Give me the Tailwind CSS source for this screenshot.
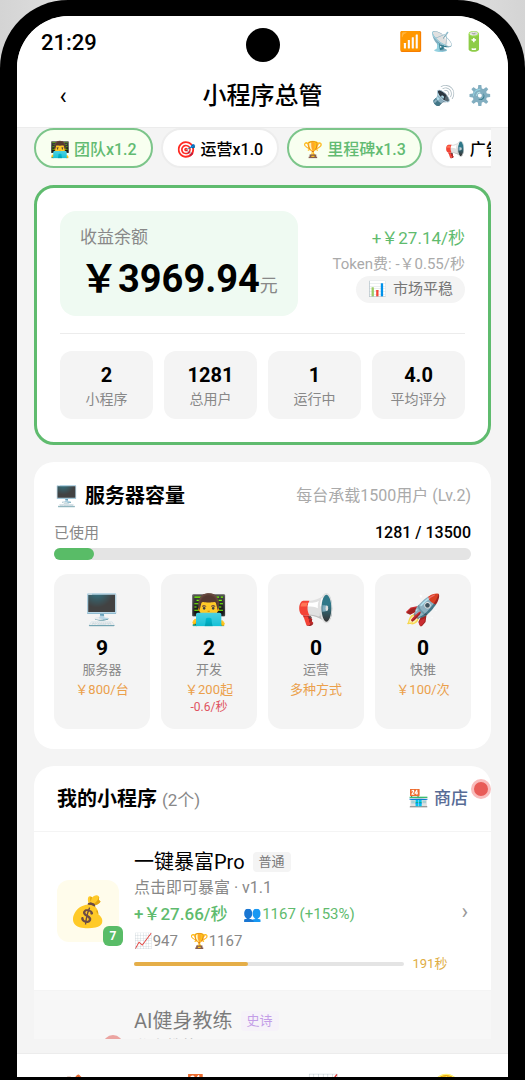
<!DOCTYPE html>
<html lang="zh-CN">
<head>
  <meta charset="UTF-8">
  <meta name="viewport" content="width=device-width, initial-scale=1.0">
  <title>小程序总管</title>
  <script src="https://cdn.jsdelivr.net/npm/@tailwindcss/browser@4"></script>
</head>
<body class="h-screen overflow-hidden bg-linear-to-r from-[#d4d4d4] via-white to-[#d4d4d4] font-[Roboto,'Noto_Sans_CJK_SC','Noto_Color_Emoji',sans-serif] text-black">
  <!-- Phone frame -->
  <div class="h-full rounded-t-[68px] bg-black px-[17px] pt-4 pb-[3px]">
    <div class="relative flex h-full flex-col overflow-hidden rounded-t-[52px] bg-[#f4f4f4]">
      <div class="absolute top-3 left-1/2 size-[34px] -translate-x-1/2 rounded-full bg-black"></div>

      <!-- Status bar and header -->
      <header class="shrink-0 border-b border-[#ececec] bg-white">
        <div class="flex h-[53px] items-center justify-between pr-[22px] pl-6">
          <time class="text-[22px] font-medium">21:29</time>
          <div class="flex gap-2 text-[19px]"><span>📶</span><span>📡</span><span>🔋</span></div>
        </div>
        <div class="grid h-[58px] grid-cols-3 items-center px-4 pb-1">
          <button class="w-15 text-center text-[24px]" aria-label="返回">‹</button>
          <h1 class="text-center text-[24px] font-medium whitespace-nowrap">小程序总管</h1>
          <div class="flex justify-end gap-3 text-[19px]"><button aria-label="声音">🔊</button><button aria-label="设置">⚙️</button></div>
        </div>
      </header>

      <main class="flex min-h-0 flex-1 flex-col gap-[17px] overflow-hidden px-[17px]">
        <!-- Multipliers -->
        <div class="flex shrink-0 gap-2 overflow-hidden text-[16px] font-medium whitespace-nowrap">
          <button class="flex h-10 shrink-0 items-center gap-1 rounded-full border-2 border-[#7cc58a] bg-[#f8fff0] px-[14px] pt-[3px] text-[#62bb72]"><span>👨‍💻</span>团队x1.2</button>
          <button class="flex h-10 shrink-0 items-center gap-1 rounded-full border-2 border-[#ededed] bg-white px-[14px] pt-[3px]"><span>🎯</span>运营x1.0</button>
          <button class="flex h-10 shrink-0 items-center gap-1 rounded-full border-2 border-[#7cc58a] bg-[#f8fff0] px-[14px] pt-[3px] text-[#62bb72]"><span>🏆</span>里程碑x1.3</button>
          <button class="flex h-10 shrink-0 items-center gap-1 rounded-full border-2 border-[#ededed] bg-white px-[14px] pt-[3px]"><span>📢</span>广告x1.0</button>
        </div>

        <!-- Balance -->
        <section class="shrink-0 rounded-[20px] border-3 border-[#5fbb6e] bg-white p-[23px]">
          <div class="flex items-center justify-between border-b border-[#ececec] pb-[17px]">
            <div class="rounded-2xl bg-[#effaf2] px-5 pt-[14px] pb-[6px]">
              <p class="text-[17px] leading-6 text-[#888]">收益余额</p>
              <p class="flex items-baseline text-[38px] leading-[61px] font-bold">￥3969.94<span class="text-[18px] leading-6 font-normal text-[#888]">元</span></p>
            </div>
            <div class="flex flex-col items-end">
              <p class="text-[17px] leading-7 text-[#5fbb6e]">+￥27.14/秒</p>
              <p class="text-[15px] leading-6 text-[#aaa]">Token费: -￥0.55/秒</p>
              <p class="flex items-center gap-[6px] rounded-full bg-[#f4f4f4] px-3 text-[15px] leading-[27px] text-[#777]"><span>📊</span>市场平稳</p>
            </div>
          </div>
          <dl class="mt-[17px] grid grid-cols-4 gap-[11px] text-center">
            <div class="flex flex-col-reverse rounded-xl bg-[#f4f4f4] pt-3 pb-2"><dt class="text-[14px] leading-6 text-[#888]">小程序</dt><dd class="text-[20px] leading-6 font-bold">2</dd></div>
            <div class="flex flex-col-reverse rounded-xl bg-[#f4f4f4] pt-3 pb-2"><dt class="text-[14px] leading-6 text-[#888]">总用户</dt><dd class="text-[20px] leading-6 font-bold">1281</dd></div>
            <div class="flex flex-col-reverse rounded-xl bg-[#f4f4f4] pt-3 pb-2"><dt class="text-[14px] leading-6 text-[#888]">运行中</dt><dd class="text-[20px] leading-6 font-bold">1</dd></div>
            <div class="flex flex-col-reverse rounded-xl bg-[#f4f4f4] pt-3 pb-2"><dt class="text-[14px] leading-6 text-[#888]">平均评分</dt><dd class="text-[20px] leading-6 font-bold">4.0</dd></div>
          </dl>
        </section>

        <!-- Server capacity -->
        <section class="shrink-0 rounded-[20px] bg-white p-5">
          <div class="flex items-center justify-between">
            <h2 class="flex items-center gap-[6px] text-[20px] leading-7 font-bold"><span>🖥️</span>服务器容量</h2>
            <p class="text-[16px] leading-7 text-[#aaa]">每台承载1500用户 (Lv.2)</p>
          </div>
          <div class="mt-[9px] flex justify-between text-[16px] leading-7">
            <span class="text-[15px] text-[#888]">已使用</span>
            <span class="font-medium">1281 / 13500</span>
          </div>
          <div class="mt-px h-3 rounded-full bg-[#e4e4e4]"><div class="h-full rounded-full bg-[#59bc67]" style="width: 9.5%"></div></div>
          <div class="mt-[14px] grid grid-cols-4 gap-[11px] text-center">
            <button class="flex h-[155px] flex-col items-center rounded-[14px] bg-[#f4f4f4] pt-4 text-[13px] leading-5">
              <span class="text-[30px] leading-10">🖥️</span>
              <b class="mt-[6px] text-[21px] leading-6 font-bold">9</b>
              <span class="text-[#888]">服务器</span>
              <span class="text-[#eba04b]">￥800/台</span>
            </button>
            <button class="flex h-[155px] flex-col items-center rounded-[14px] bg-[#f4f4f4] pt-4 text-[13px] leading-5">
              <span class="text-[30px] leading-10">👨‍💻</span>
              <b class="mt-[6px] text-[21px] leading-6 font-bold">2</b>
              <span class="text-[#888]">开发</span>
              <span class="text-[#eba04b]">￥200起</span>
              <span class="text-[12px] leading-[14px] text-[#df5360]">-0.6/秒</span>
            </button>
            <button class="flex h-[155px] flex-col items-center rounded-[14px] bg-[#f4f4f4] pt-4 text-[13px] leading-5">
              <span class="text-[30px] leading-10">📢</span>
              <b class="mt-[6px] text-[21px] leading-6 font-bold">0</b>
              <span class="text-[#888]">运营</span>
              <span class="text-[#eba04b]">多种方式</span>
            </button>
            <button class="flex h-[155px] flex-col items-center rounded-[14px] bg-[#f4f4f4] pt-4 text-[13px] leading-5">
              <span class="text-[30px] leading-10">🚀</span>
              <b class="mt-[6px] text-[21px] leading-6 font-bold">0</b>
              <span class="text-[#888]">快推</span>
              <span class="text-[#eba04b]">￥100/次</span>
            </button>
          </div>
        </section>

        <!-- My apps -->
        <section class="min-h-0 flex-1 overflow-hidden rounded-t-[20px] bg-white">
          <div class="relative flex h-[66px] items-center justify-between border-b border-[#f4f4f4] px-[23px]">
            <h2 class="text-[20px] font-bold">我的小程序 <span class="text-[17px] font-normal text-[#888]">(2个)</span></h2>
            <a href="#" class="flex items-center gap-1 text-[17px] font-medium text-[#576b95]"><span>🏪</span>商店</a>
            <span class="absolute top-[13px] right-0 size-5 rounded-full border-3 border-[#f9bcbc] bg-[#e85b57]"></span>
          </div>
          <article class="flex items-center border-b border-[#f4f4f4] px-[23px] py-4">
            <div class="relative flex size-[62px] shrink-0 items-center justify-center rounded-xl bg-[#fffceb] text-[30px]">
              💰<span class="absolute -right-1 -bottom-1 flex size-5 items-center justify-center rounded-md bg-[#59bc67] text-[12px] font-bold text-white">7</span>
            </div>
            <div class="ml-[15px] min-w-0 flex-1">
              <h3 class="flex items-center gap-2 text-[20px] leading-7">一键暴富Pro <span class="rounded bg-[#f4f4f4] px-[6px] text-[13px] leading-5 text-[#777]">普通</span></h3>
              <p class="text-[16px] leading-6 text-[#888]">点击即可暴富 · v1.1</p>
              <p class="flex items-center gap-4 text-[17px] leading-7 font-medium text-[#5fbb6e]">+￥27.66/秒 <span class="text-[15px] font-normal">👥1167 (+153%)</span></p>
              <p class="flex gap-3 text-[15px] leading-[26px] text-[#888]"><span>📈947</span><span>🏆1167</span></p>
              <div class="flex items-center gap-2 text-[13px] leading-5 text-[#e0ae44]">
                <div class="h-1 flex-1 rounded-full bg-[#e4e4e4]"><div class="h-full rounded-full bg-[#e5ae48]" style="width: 42%"></div></div>
                191秒
              </div>
            </div>
            <span class="ml-[14px] text-[22px] text-[#999]">›</span>
          </article>
          <article class="flex items-center bg-[#f7f7f7] px-[23px] py-4">
            <div class="relative flex size-[62px] shrink-0 items-center justify-center rounded-xl bg-[#fffceb] text-[30px] opacity-50">
              <span class="absolute -top-1 -right-1 size-5 rounded-full bg-[#e0524c]"></span>
            </div>
            <div class="ml-[15px] h-[126px] min-w-0 flex-1 opacity-50">
              <h3 class="flex items-center gap-2 text-[20px] leading-7">AI健身教练 <span class="rounded bg-[#f6effc] px-[6px] text-[13px] leading-5 text-[#9046d8]">史诗</span></h3>
              <p class="text-[16px] leading-6 text-[#888]">私人教练</p>
            </div>
          </article>
        </section>
      </main>

      <!-- Tab bar, mostly below the fold -->
      <nav class="mt-[14px] grid h-6 shrink-0 grid-cols-4 overflow-hidden border-t border-[#ececec] bg-white pt-4 text-center text-[26px] leading-9">
        <a href="#">🏠</a><a href="#">🏪</a><a href="#">📈</a><a href="#">🪙</a>
      </nav>
    </div>
  </div>
</body>
</html>
